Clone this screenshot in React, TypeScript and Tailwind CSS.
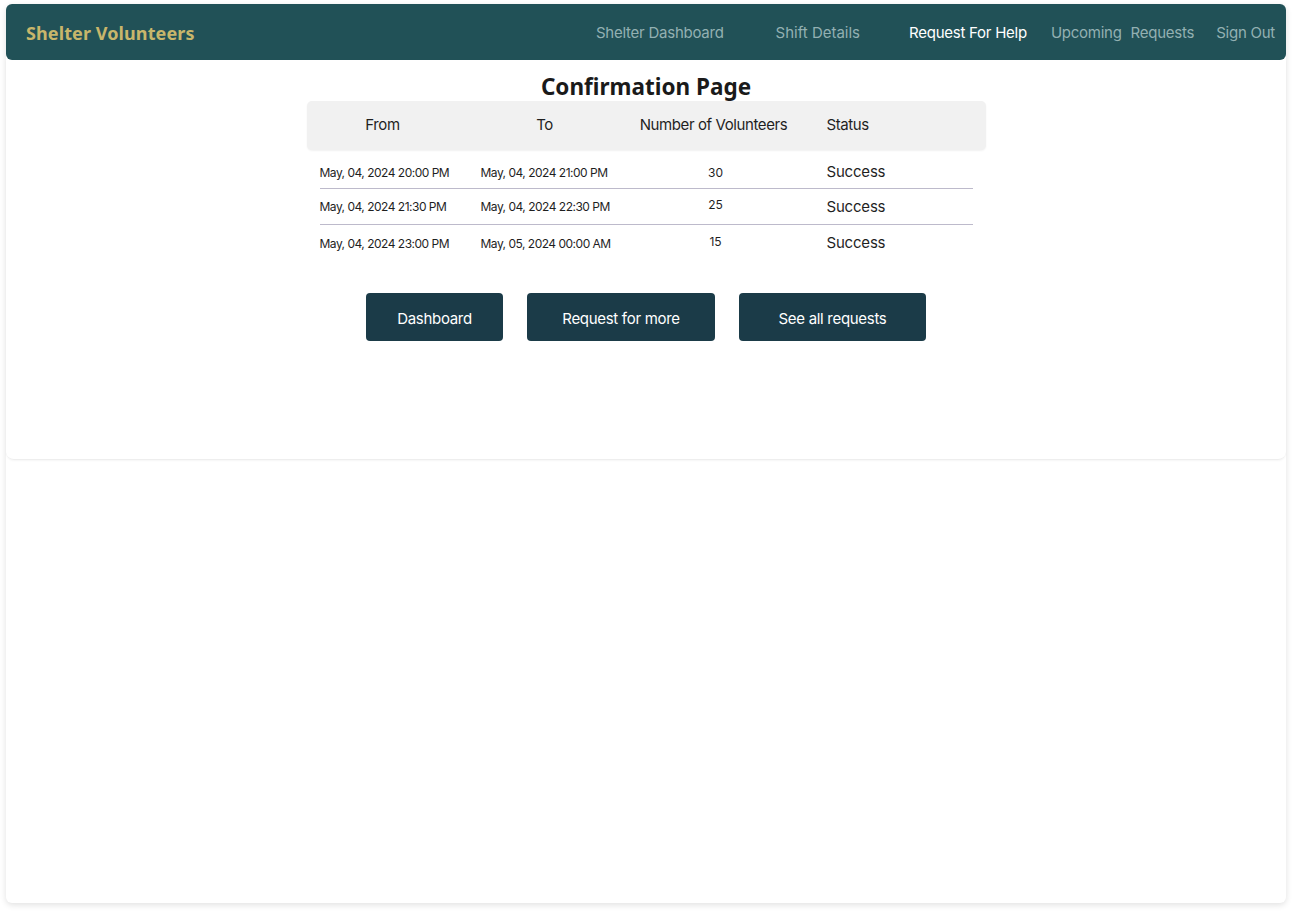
import React from "react";

const rows = [
  { from: "May, 04, 2024 20:00 PM", to: "May, 04, 2024 21:00 PM", n: "30", s: "Success" },
  { from: "May, 04, 2024 21:30 PM", to: "May, 04, 2024 22:30 PM", n: "25", s: "Success" },
  { from: "May, 04, 2024 23:00 PM", to: "May, 05, 2024 00:00 AM", n: "15", s: "Success" },
];

export default function App() {
  return (
    <div className="min-h-[913px] bg-white px-[6px] pt-[4px]" style={{ fontFamily: "Inter, 'Noto Sans', sans-serif" }}>
      <div className="h-[899px] rounded-[6px] bg-white shadow-[0_2px_6px_rgba(0,0,0,0.12)] flex flex-col">
        <nav className="h-[56px] shrink-0 rounded-[6px] bg-[#215157] flex items-center pl-[20px] pr-[11px] pt-[2px]">
          <div className="text-[18px] font-bold text-[#c8b66b] tracking-[0.1px]" style={{ fontFamily: "'Noto Sans', Inter, sans-serif" }}>
            Shelter Volunteers
          </div>
          <div className="ml-auto flex items-center text-[15px] tracking-[-0.25px] text-[#93b0b2]">
            <span>Shelter Dashboard</span>
            <span className="ml-[52px] tracking-[0px]">Shift Details</span>
            <span className="ml-[49px] text-white">Request For Help</span>
            <span className="ml-[24px] [word-spacing:5px]">Upcoming Requests</span>
            <span className="ml-[22px]">Sign Out</span>
          </div>
        </nav>
        <section className="h-[400px] shrink-0 rounded-b-[8px] border-b border-[#eeeeee] shadow-[0_1px_2px_rgba(0,0,0,0.04)] flex flex-col items-center">
          <h1 className="mt-[13px] text-[22.5px] leading-[28px] font-bold text-[#1a1a1a]" style={{ fontFamily: "'Noto Sans', Inter, sans-serif" }}>
            Confirmation Page
          </h1>
          <div className="mt-0 w-[679px]">
            <div className="h-[49px] rounded-[5px] bg-[#f1f1f1] shadow-[0_1px_2px_rgba(0,0,0,0.06)] grid grid-cols-[152px_172px_166px_1fr] items-center text-[15px] tracking-[-0.4px] text-[#1f1f1f]">
              <div className="text-center">From</div>
              <div className="text-center">To</div>
              <div className="text-center">Number of Volunteers</div>
              <div className="pl-[30px]">Status</div>
            </div>
            <div className="mt-[2px] px-[13px]">
              {rows.map((r, i) => (
                <div
                  key={i}
                  className={`grid grid-cols-[161px_155px_160px_1fr] items-center ${i === 0 ? "h-[37px] pt-[5px]" : "h-[36px] pt-[1px]"} ${i < 2 ? "border-b border-[#bdbacb]" : ""}`}
                >
                  <div className="text-[12px] tracking-[-0.5px] text-[#1f1f1f]">{r.from}</div>
                  <div className="text-[12px] tracking-[-0.5px] text-[#1f1f1f]">{r.to}</div>
                  <div className={`text-center text-[12px] text-[#1f1f1f] ${i > 0 ? "-mt-[4px]" : ""}`}>{r.n}</div>
                  <div className="pl-[31px] text-[15px] tracking-[-0.2px] text-[#1f1f1f]">{r.s}</div>
                </div>
              ))}
            </div>
          </div>
          <div className="mt-[32px] flex gap-[24px] text-[15px] tracking-[-0.3px] text-white">
            <button className="h-[48px] w-[137px] rounded-[4px] bg-[#1b3b48] pt-[4px]">Dashboard</button>
            <button className="h-[48px] w-[188px] rounded-[4px] bg-[#1b3b48] pt-[4px]">Request for more</button>
            <button className="h-[48px] w-[187px] rounded-[4px] bg-[#1b3b48] pt-[4px]">See all requests</button>
          </div>
        </section>
      </div>
    </div>
  );
}
